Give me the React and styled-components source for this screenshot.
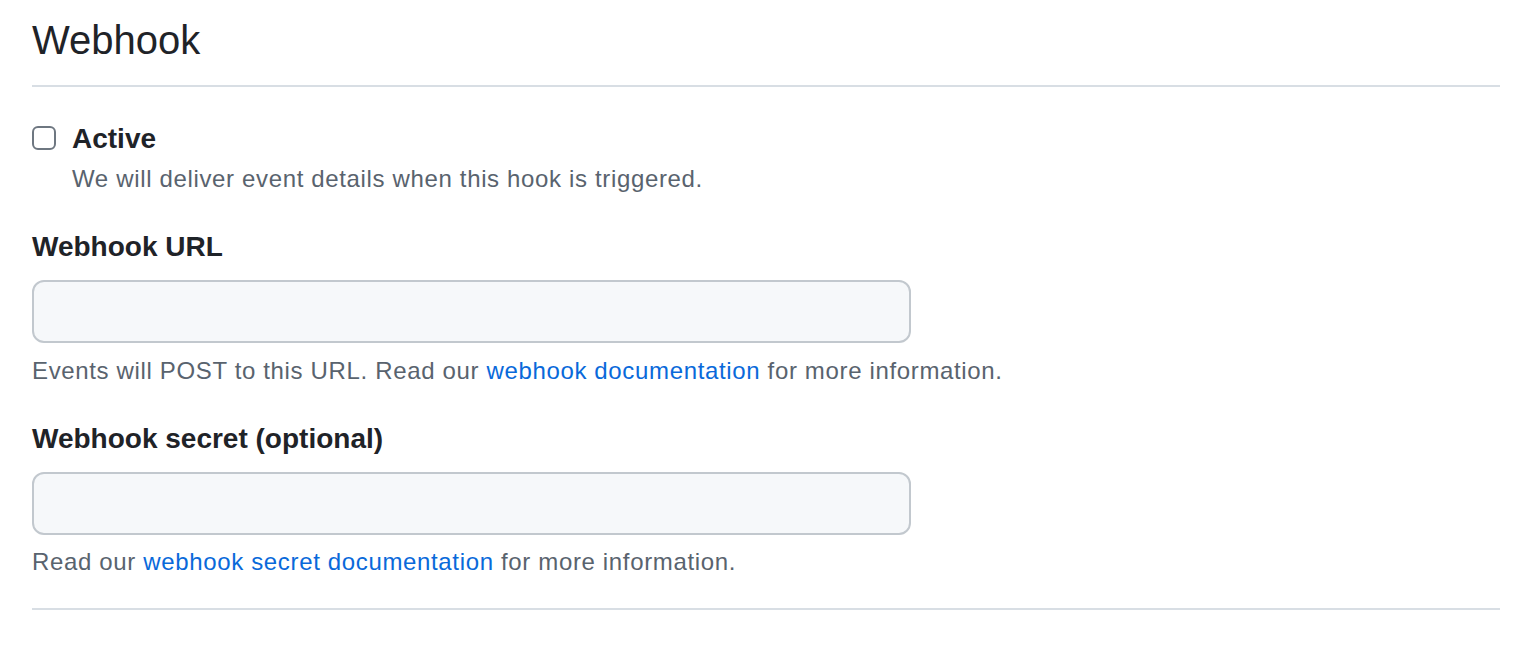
import React from "react";
import styled, { createGlobalStyle } from "styled-components";

const Global = createGlobalStyle`
  html, body { margin: 0; padding: 0; background: #ffffff; }
  body { font-family: "Liberation Sans", Arial, sans-serif; color: #1f2328; }
`;

const Page = styled.div`
  padding: 0 30px 0 32px;
`;

const Subhead = styled.div`
  padding-top: 10px;
  padding-bottom: 15px;
  border-bottom: 2px solid #d8dee4;
`;

const Heading = styled.h2`
  margin: 0;
  font-size: 40px;
  line-height: 60px;
  font-weight: 400;
  color: #1f2328;
`;

const CheckRow = styled.div`
  display: grid;
  grid-template-columns: 24px 1fr;
  column-gap: 16px;
  margin-top: 32px;
`;

const Box = styled.span`
  box-sizing: border-box;
  width: 24px;
  height: 24px;
  margin-top: 7px;
  border: 2px solid #6e7781;
  border-radius: 6px;
  background: #fff;
`;

const CheckLabel = styled.div`
  font-size: 28px;
  line-height: 40px;
  font-weight: 700;
  color: #1f2328;
`;

const Note = styled.p`
  margin: ${(p) => p.$mt || 0}px 0 0;
  font-size: 24px;
  line-height: 36px;
  letter-spacing: 0.65px;
  color: #59636e;
  grid-column: ${(p) => (p.$indent ? "2" : "auto")};
`;

const Link = styled.a`
  color: #0969da;
  text-decoration: none;
`;

const Group = styled.div`
  margin-top: 30px;
`;

const Label = styled.label`
  display: block;
  font-size: 28px;
  line-height: 40px;
  font-weight: 700;
  color: #1f2328;
`;

const Input = styled.input`
  display: block;
  box-sizing: border-box;
  width: 879px;
  height: 63px;
  margin-top: 13px;
  padding: 0 24px;
  font-size: 28px;
  font-family: inherit;
  background: #f6f8fa;
  border: 2px solid #c2c8ce;
  border-radius: 12px;
  outline: none;
`;

const Rule = styled.hr`
  margin: 28px 0 0;
  border: 0;
  border-top: 2px solid #d8dee4;
`;

export default function App() {
  return (
    <Page>
      <Global />
      <Subhead>
        <Heading>Webhook</Heading>
      </Subhead>
      <CheckRow>
        <Box />
        <CheckLabel>Active</CheckLabel>
        <Note $indent $mt={2}>We will deliver event details when this hook is triggered.</Note>
      </CheckRow>
      <Group>
        <Label>Webhook URL</Label>
        <Input type="text" />
        <Note $mt={10}>
          Events will POST to this URL. Read our <Link href="#">webhook documentation</Link> for more information.
        </Note>
      </Group>
      <Group>
        <Label>Webhook secret (optional)</Label>
        <Input type="text" />
        <Note $mt={9}>
          Read our <Link href="#">webhook secret documentation</Link> for more information.
        </Note>
      </Group>
      <Rule />
    </Page>
  );
}
